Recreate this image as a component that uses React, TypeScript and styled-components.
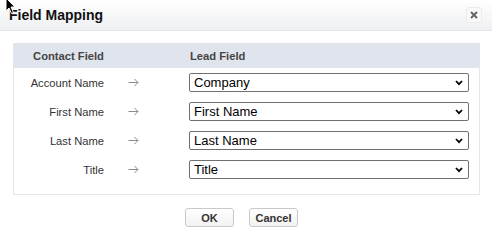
import React from "react";
import styled, { createGlobalStyle } from "styled-components";

const GlobalStyle = createGlobalStyle`
  html, body {
    margin: 0;
    padding: 0;
    background: #fff;
  }
  body {
    font-family: "Liberation Sans", Arial, Helvetica, sans-serif;
  }
`;

const Dialog = styled.div`
  position: relative;
  width: 492px;
  height: 243px;
  background: #fff;
  overflow: hidden;
`;

const Header = styled.div`
  height: 30px;
  display: flex;
  align-items: center;
  justify-content: space-between;
  padding: 0 10px 0 9px;
  background: linear-gradient(#ffffff, #eef0f1);
  border-bottom: 1px solid #e3e5e8;
`;

const Title = styled.h2`
  margin: 0;
  font-size: 14px;
  font-weight: bold;
  color: #111;
`;

const CloseButton = styled.button`
  width: 16px;
  height: 16px;
  padding: 0;
  display: flex;
  align-items: center;
  justify-content: center;
  border: 1px solid #ebebeb;
  border-radius: 3px;
  background: #f9f9f9;
  cursor: pointer;
`;

const Body = styled.div`
  padding: 12px 12px 0 13px;
`;

const Panel = styled.div`
  border: 1px solid #e3e6ec;
  border-top: none;
`;

const Grid = styled.div`
  display: grid;
  grid-template-columns: 109px 66px 280px;
  align-items: center;
`;

const HeadRow = styled(Grid)`
  height: 25px;
  background: #e0e4ec;
  margin: 0 -1px;
  padding-left: 1px;
`;

const HeadCell = styled.div<{ align?: string }>`
  font-size: 11.2px;
  font-weight: bold;
  color: #444;
  text-align: ${({ align }) => align || "left"};
  padding-left: ${({ align }) => (align === "center" ? "0" : "1px")};
`;

const Rows = styled.div`
  display: flex;
  flex-direction: column;
  gap: 10px;
  padding: 5px 0 15px;
`;

const Row = styled(Grid)`
  height: 19px;
`;

const Label = styled.div`
  text-align: right;
  padding-right: 19px;
  font-size: 11.2px;
  color: #333;
`;

const Arrow = styled.svg`
  display: block;
  margin-left: 5px;
`;

const SelectWrap = styled.div`
  position: relative;
  height: 19px;
`;

const Select = styled.select`
  appearance: none;
  -webkit-appearance: none;
  width: 280px;
  height: 19px;
  box-sizing: border-box;
  margin: 0;
  padding: 0 20px 0 4px;
  border: 1px solid #707070;
  border-radius: 2px;
  background: #fff;
  font-family: "Liberation Sans", Arial, sans-serif;
  font-size: 13px;
  color: #000;
  line-height: 17px;
`;

const Chevron = styled.svg`
  position: absolute;
  right: 6px;
  top: 7px;
  pointer-events: none;
`;

const Actions = styled.div`
  display: flex;
  justify-content: center;
  gap: 15px;
  margin-top: 13px;
  padding-right: 10px;
`;

const Button = styled.button`
  width: 49px;
  height: 19px;
  box-sizing: border-box;
  padding: 0;
  border: 1px solid #c9c9c9;
  border-radius: 3px;
  background: linear-gradient(#ffffff, #f2f2f2);
  font-family: "Liberation Sans", Arial, sans-serif;
  font-size: 11px;
  font-weight: bold;
  color: #333;
  cursor: pointer;
`;

const Cursor = styled.svg`
  position: absolute;
  left: 5px;
  top: -3px;
  pointer-events: none;
`;

const mappings = [
  { contact: "Account Name", lead: "Company" },
  { contact: "First Name", lead: "First Name" },
  { contact: "Last Name", lead: "Last Name" },
  { contact: "Title", lead: "Title" },
];

const leadOptions = ["Company", "First Name", "Last Name", "Title", "Email", "Phone"];

const App: React.FC = () => {
  return (
    <Dialog>
      <GlobalStyle />
      <Header>
        <Title>Field Mapping</Title>
        <CloseButton aria-label="Close">
          <svg width="8" height="8" viewBox="0 0 8 8">
            <path d="M1 1 L7 7 M7 1 L1 7" stroke="#666" strokeWidth="2" />
          </svg>
        </CloseButton>
      </Header>
      <Body>
        <Panel>
          <HeadRow>
            <HeadCell align="center">Contact Field</HeadCell>
            <div />
            <HeadCell>Lead Field</HeadCell>
          </HeadRow>
          <Rows>
            {mappings.map((m) => (
              <Row key={m.contact}>
                <Label>{m.contact}</Label>
                <Arrow width="11" height="9" viewBox="0 0 11 9">
                  <path
                    d="M0.5 4.5 L10 4.5 M6.5 1 L10 4.5 L6.5 8"
                    fill="none"
                    stroke="#8c8c8c"
                    strokeWidth="1"
                  />
                </Arrow>
                <SelectWrap>
                  <Select defaultValue={m.lead}>
                    {leadOptions.map((o) => (
                      <option key={o}>{o}</option>
                    ))}
                  </Select>
                  <Chevron width="8" height="6" viewBox="0 0 8 6">
                    <path d="M1 1 L4 4.2 L7 1" fill="none" stroke="#000" strokeWidth="1.8" />
                  </Chevron>
                </SelectWrap>
              </Row>
            ))}
          </Rows>
        </Panel>
        <Actions>
          <Button>OK</Button>
          <Button>Cancel</Button>
        </Actions>
      </Body>
      <Cursor width="12" height="18" viewBox="0 0 12 18">
        <path d="M1 1 L1 14 L4 11 L6.5 16.5 L8.5 15.5 L6 10 L10 10 Z" fill="#000" stroke="#fff" strokeWidth="1" />
      </Cursor>
    </Dialog>
  );
};

export default App;
